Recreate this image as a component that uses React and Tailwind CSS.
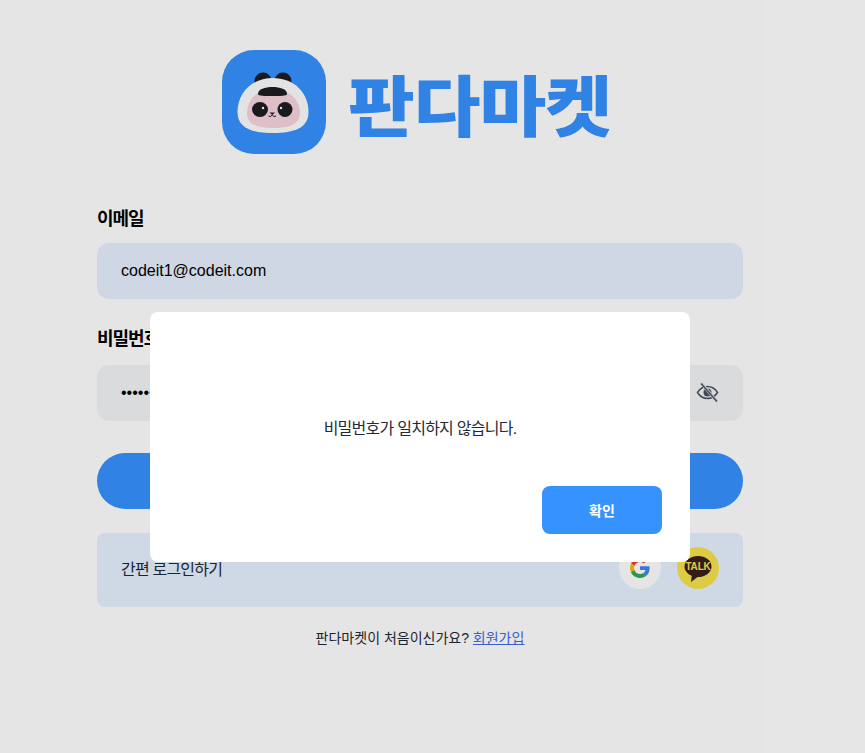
import { useState } from "react";

const kr = "font-['Liberation_Sans','Noto_Sans_CJK_KR',sans-serif]";

function PandaLogo() {
  return (
    <svg width="104" height="104" viewBox="0 0 104 104" className="shrink-0">
      <rect width="104" height="104" rx="32" fill="#3692ff" />
      <circle cx="41" cy="31" r="8.500" fill="#1b1d22" />
      <circle cx="61" cy="31" r="8.500" fill="#1b1d22" />
      <path d="M15.500 62C15.500 42 31 28 51 28 71 28 86.500 42 86.500 62 86.500 78 72 83 51 83 30 83 15.500 78 15.500 62Z" fill="#fdfdfd" />
      <path d="M25 63C25 49 36 39 51 39 66 39 78 49 78 63 78 74 68 78 51 78 34 78 25 74 25 63Z" fill="#f8d5de" />
      <path d="M36 44C36 39 43 37 50.500 37 58 37 65 39 65 44 65 46 58 46 50.500 46 43 46 36 46 36 44Z" fill="#1b1d22" />
      <ellipse cx="38" cy="59.500" rx="8" ry="7.500" fill="#1b1d22" />
      <ellipse cx="63" cy="59.500" rx="7.500" ry="7.500" fill="#1b1d22" />
      <circle cx="41" cy="58" r="1.200" fill="#fff" />
      <circle cx="59" cy="58" r="1.200" fill="#fff" />
      <path d="M47.500 62.500H53L50.200 65Z" fill="#1b1d22" />
      <path d="M46.500 66Q48.500 67.500 50.200 65 52 67.500 54 66" fill="none" stroke="#1b1d22" strokeWidth="1" />
    </svg>
  );
}

function EyeOffIcon() {
  return (
    <svg width="24" height="24" viewBox="0 0 24 24" fill="none" stroke="#4b5563" strokeWidth="1.500" strokeLinecap="round">
      <path d="M2.500 11.500C5 7.500 8 5.500 12.500 5.500S20 7.500 22.500 11.500C20 15.500 17 17.500 12.500 17.500S5 15.500 2.500 11.500Z" />
      <circle cx="12.500" cy="11.500" r="4" fill="#4b5563" stroke="none" />
      <path d="M7 3L21.500 20" stroke="#dbdcdd" strokeWidth="3" />
      <path d="M6.500 3L21.500 20" />
    </svg>
  );
}

function GoogleIcon() {
  return (
    <svg width="20" height="20" viewBox="0 0 48 48">
      <path fill="#EA4335" d="M24 9.500c3.500 0 6.700 1.200 9.200 3.600l6.900-6.900C35.900 2.400 30.500 0 24 0 14.600 0 6.500 5.400 2.600 13.200l8 6.200C12.400 13.700 17.700 9.500 24 9.500z" />
      <path fill="#4285F4" d="M47 24.500c0-1.600-.1-3.100-.4-4.500H24v9h12.900c-.6 3-2.300 5.500-4.800 7.200l7.700 6c4.500-4.200 7.200-10.300 7.200-17.700z" />
      <path fill="#FBBC05" d="M10.600 28.600c-.5-1.400-.8-3-.8-4.600s.3-3.200.8-4.600l-8-6.200C.9 16.500 0 20.100 0 24s.9 7.500 2.600 10.800l8 6.200z" />
      <path fill="#34A853" d="M24 48c6.500 0 11.900-2.100 15.900-5.800l-7.700-6c-2.200 1.500-4.900 2.300-8.200 2.300-6.300 0-11.600-4.200-13.400-9.900l-8 6.200C6.500 42.600 14.600 48 24 48z" />
    </svg>
  );
}

function KakaoIcon() {
  return (
    <div className="relative flex h-[42px] w-[42px] items-center justify-center rounded-full bg-[#f8e34c]">
      <svg width="30" height="30" viewBox="0 0 30 30" className="absolute left-[6px] top-[8px]">
        <ellipse cx="15" cy="11.500" rx="13.500" ry="10.500" fill="#3c1e1e" />
        <path d="M9 19L8 27 16 21Z" fill="#3c1e1e" />
      </svg>
      <span className="relative -mt-[3px] font-['Liberation_Sans',sans-serif] text-[10px] font-bold tracking-[-0.2px] text-[#f8e34c]">TALK</span>
    </div>
  );
}

export default function App() {
  const [email] = useState("codeit1@codeit.com");
  const [password] = useState("password");

  return (
    <div className={`relative h-[753px] overflow-hidden bg-white text-black ${kr}`}>
      <main className="flex w-[840px] flex-col pl-[97px] pr-[97px] pt-[50px]">
        <header className="flex items-center gap-[34px] pl-[125px]">
          <PandaLogo />
          <span className="scale-x-[1.1] font-['Noto_Sans_CJK_KR',sans-serif] text-[66px] leading-none font-black tracking-[-1px] text-[#3692ff]">판다마켓</span>
        </header>

        <label className="mt-[53px] text-[18px] leading-[24px] font-bold tracking-[-1px]">이메일</label>
        <input
          readOnly
          value={email}
          className="mt-[12px] h-14 rounded-xl bg-[#e8f0fe] px-6 text-base outline-none"
        />

        <label className="mt-[28px] text-[18px] leading-[24px] font-bold tracking-[-1px]">비밀번호</label>
        <div className="relative mt-[14px]">
          <input
            readOnly
            type="password"
            value={password}
            className="h-14 w-full rounded-xl bg-[#f3f4f6] px-6 text-base outline-none"
          />
          <span className="absolute right-6 top-4">
            <EyeOffIcon />
          </span>
        </div>

        <button className="mt-8 h-14 rounded-full bg-[#3692ff] text-xl font-semibold text-white">로그인</button>

        <div className="mt-6 flex h-[74px] items-center justify-between rounded-lg bg-[#e6f2ff] px-6">
          <span className="text-base tracking-[-0.8px] text-[#1f2937]">간편 로그인하기</span>
          <div className="-mt-1 flex items-center gap-4">
            <div className="flex h-[42px] w-[42px] items-center justify-center rounded-full bg-white">
              <GoogleIcon />
            </div>
            <KakaoIcon />
          </div>
        </div>

        <p className="mt-[19px] text-center text-sm leading-[24px] text-[#1f2937]">
          판다마켓이 처음이신가요? <a href="#" className="text-[#4169e8] underline">회원가입</a>
        </p>
      </main>

      <div className="absolute inset-0 flex justify-center bg-black/10 pr-[25px] pt-[312px]">
        <div className="flex h-[250px] w-[540px] flex-col rounded-lg bg-white pr-7">
          <p className="mt-[105px] pl-7 text-center text-base leading-6 tracking-[-0.75px] text-[#1f2937]">비밀번호가 일치하지 않습니다.</p>
          <button className="mt-[45px] h-12 w-[120px] self-end rounded-lg bg-[#3692ff] pt-0.5 text-sm font-semibold text-white">확인</button>
        </div>
      </div>
    </div>
  );
}
